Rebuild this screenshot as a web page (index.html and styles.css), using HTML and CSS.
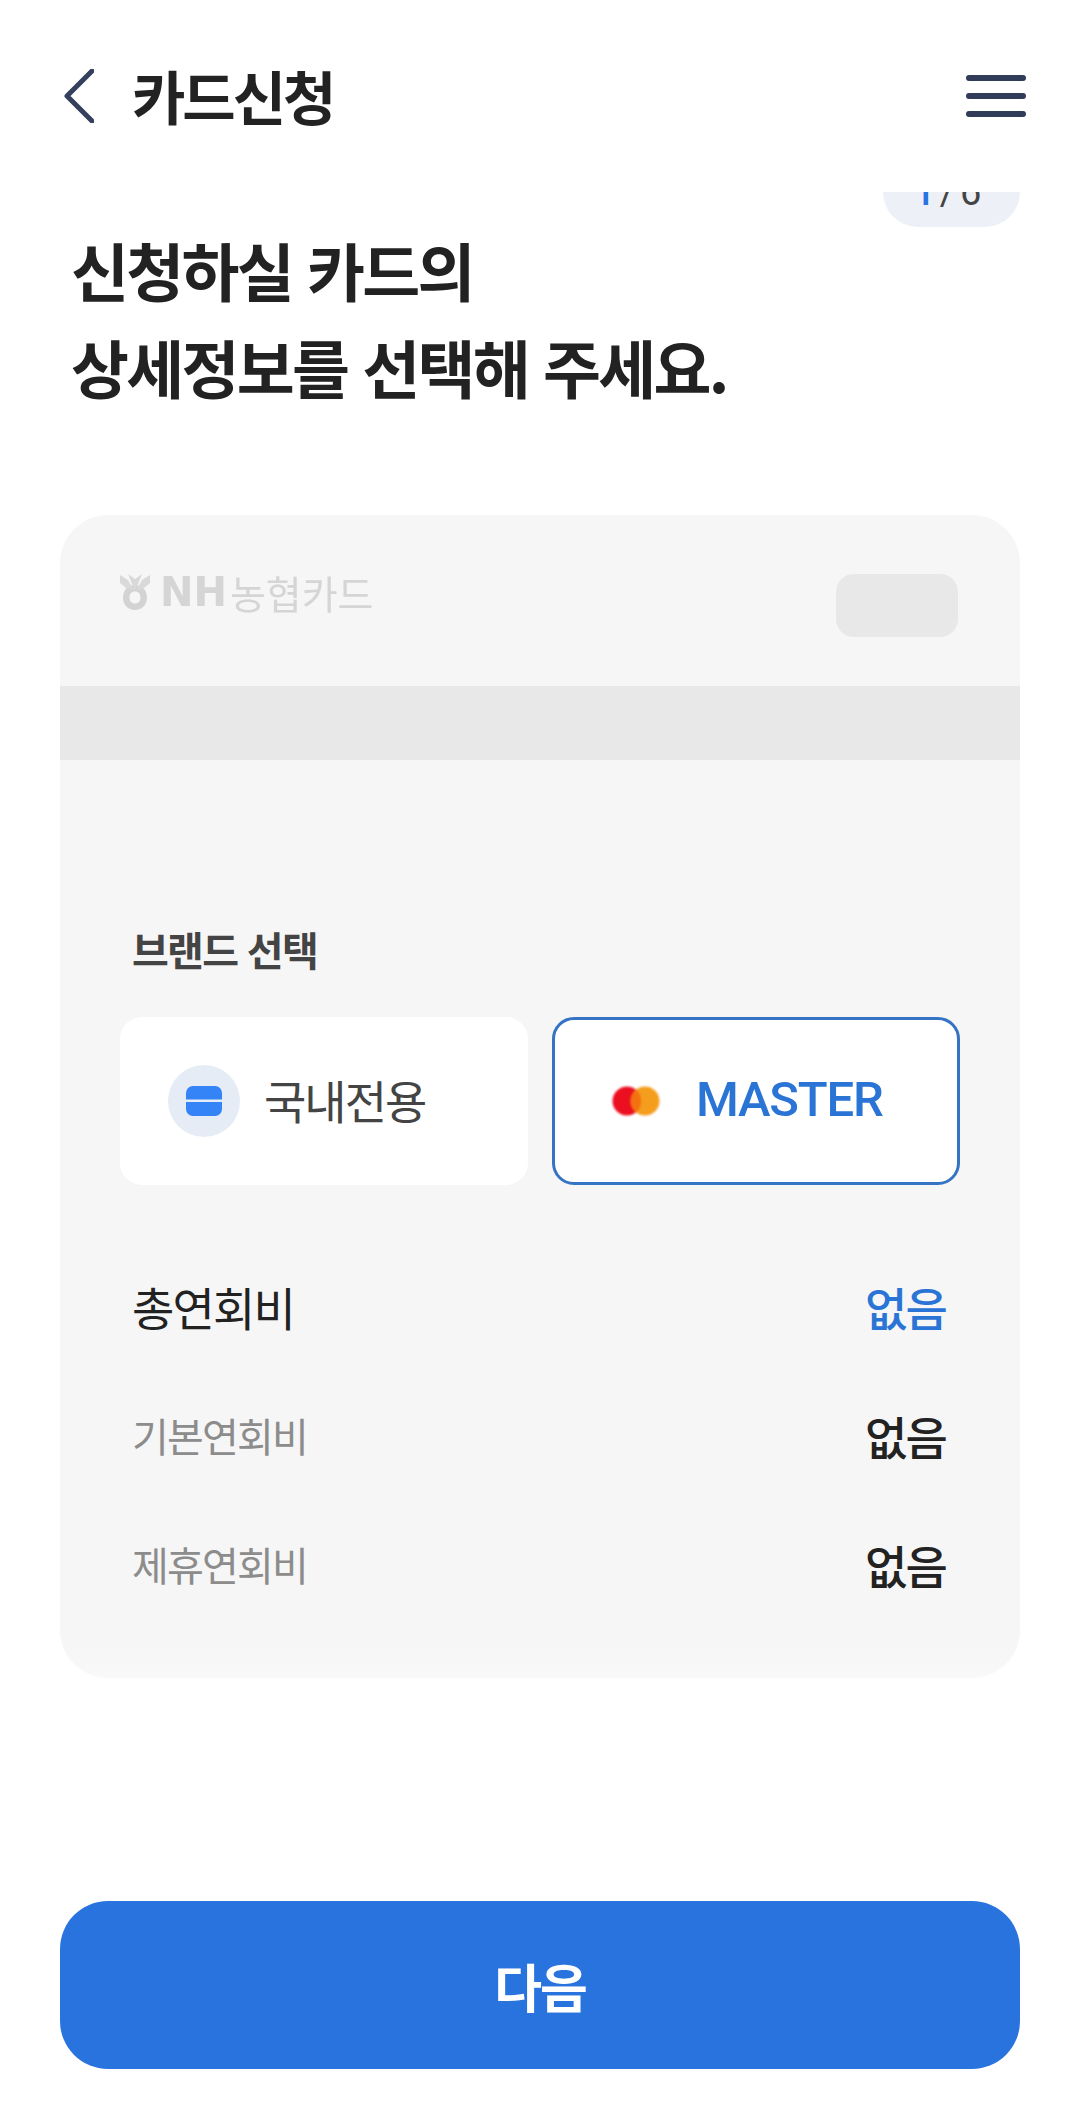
FILE: index.html
```html
<!DOCTYPE html>
<html lang="ko">
<head>
    <meta charset="UTF-8">
    <title>카드신청</title>
    <meta name="viewport" content="width=device-width, initial-scale=1">
    <link rel="stylesheet" href="styles.css">
</head>
<body>
    <div class="page">
        <header class="top-bar">
            <div class="top-left">
                <svg class="back-icon" width="30" height="54" viewBox="0 0 30 54">
                    <path d="M28 2 L3 27 L28 52" fill="none" stroke="#34405c" stroke-width="5" stroke-linecap="round" stroke-linejoin="round"/>
                </svg>
                <h1 class="top-title">카드신청</h1>
            </div>
            <div class="menu-icon">
                <span></span>
                <span></span>
                <span></span>
            </div>
        </header>

        <main class="content">
            <div class="step-badge"><b>1</b> / 6</div>
            <h2 class="heading">신청하실 카드의<br>상세정보를 선택해 주세요.</h2>

            <section class="card">
                <div class="card-top">
                    <div class="logo">
                        <svg class="logo-mark" width="30" height="36" viewBox="0 0 30 36">
                            <path fill-rule="evenodd" d="M15 11 C22 11 27 16 27 23.500 C27 31 22 36 15 36 C8 36 3 31 3 23.500 C3 16 8 11 15 11 Z M15 17.500 C11.500 17.500 9.500 20 9.500 23.500 C9.500 27 11.500 29.500 15 29.500 C18.500 29.500 20.500 27 20.500 23.500 C20.500 20 18.500 17.500 15 17.500 Z" fill="#d3d3d3"/>
                            <path d="M0 1 L8 6 L13.500 16 L6 14 L0 9 Z M30 1 L22 6 L16.500 16 L24 14 L30 9 Z M8 0 L15 5 L22 0 L16 15 L14 15 Z" fill="#d9d9d9"/>
                        </svg>
                        <span class="logo-nh">NH</span>
                        <span class="logo-name">농협카드</span>
                    </div>
                    <div class="chip"></div>
                </div>
                <div class="stripe"></div>

                <div class="card-body">
                    <div class="brand-label">브랜드 선택</div>
                    <div class="brand-list">
                        <div class="brand-btn">
                            <span class="brand-circle">
                                <svg width="36" height="30" viewBox="0 0 36 30">
                                    <rect width="36" height="30" rx="7" fill="#3584f7"/>
                                    <rect y="13.500" width="36" height="2.500" fill="#e6ecf6"/>
                                </svg>
                            </span>
                            <span class="brand-name">국내전용</span>
                        </div>
                        <div class="brand-btn selected">
                            <svg class="master-icon" width="48" height="30" viewBox="0 0 48 30">
                                <circle cx="15" cy="15" r="14.500" fill="#eb0f20"/>
                                <circle cx="33" cy="15" r="14.500" fill="#f59e1e"/>
                                <path d="M24 3.500 C27.500 6 29 10.500 29 15 C29 19.500 27.500 24 24 26.500 C20.500 24 19 19.500 19 15 C19 10.500 20.500 6 24 3.500 Z" fill="#f3710f"/>
                            </svg>
                            <span class="brand-name">MASTER</span>
                        </div>
                    </div>

                    <div class="fee-list">
                        <div class="fee-row total">
                            <span>총연회비</span>
                            <strong>없음</strong>
                        </div>
                        <div class="fee-row">
                            <span>기본연회비</span>
                            <strong>없음</strong>
                        </div>
                        <div class="fee-row">
                            <span>제휴연회비</span>
                            <strong>없음</strong>
                        </div>
                    </div>
                </div>
            </section>

            <button type="button" class="btn-next">다음</button>
        </main>
    </div>
</body>
</html>
```

FILE: styles.css
```css
body {
    margin: 0;
    background: #fff;
    color: #222;
    font-family: "Noto Sans CJK KR", "Noto Sans", sans-serif;
}
.page {
    display: flex;
    flex-direction: column;
    height: 2105px;
    overflow: hidden;
}
.top-bar {
    display: flex;
    flex: none;
    justify-content: space-between;
    align-items: flex-start;
    height: 192px;
    padding: 69px 54px 0 64px;
    box-sizing: border-box;
}
.top-left {
    display: flex;
    align-items: center;
    gap: 38px;
}
.back-icon {
    display: block;
}
.top-title {
    margin: -2px 0 0;
    font-size: 58px;
    line-height: 54px;
    font-weight: 700;
    letter-spacing: -3px;
    color: #222;
}
.menu-icon {
    display: flex;
    flex-direction: column;
    gap: 12px;
    width: 60px;
    margin-top: 6px;
}
.menu-icon span {
    height: 6px;
    border-radius: 3px;
    background: #303c5a;
}

.content {
    display: flex;
    flex: 1;
    flex-direction: column;
    min-height: 0;
    padding: 0 60px 36px;
    overflow: hidden;
}
.step-badge {
    align-self: flex-end;
    width: 137px;
    height: 70px;
    padding-right: 8px;
    margin-top: -35px;
    border-radius: 35px;
    background: #edf0f6;
    color: #444;
    font-size: 38px;
    line-height: 70px;
    text-align: center;
    word-spacing: -5px;
    font-family: "Roboto", sans-serif;
    box-sizing: border-box;
}
.step-badge b {
    color: #2874e0;
    font-weight: 500;
}
.heading {
    margin: -7px 0 101px;
    padding-left: 11px;
    font-size: 63px;
    line-height: 97px;
    font-weight: 700;
    letter-spacing: -2.700px;
    color: #222;
}

.card {
    height: 1163px;
    border-radius: 48px;
    background: linear-gradient(to bottom, #f6f6f6 0, #f6f6f6 1135px, #f9f9f9 100%);
}
.card-top {
    display: flex;
    justify-content: space-between;
    height: 63px;
    padding: 59px 62px 49px 60px;
}
.logo {
    display: flex;
    align-items: center;
    height: 36px;
    color: #d5d5d5;
    filter: blur(0.4px);
}
.logo-mark {
    margin-right: 10px;
}
.logo-nh {
    font-family: "DejaVu Sans", sans-serif;
    font-size: 40px;
    font-weight: 700;
}
.logo-name {
    margin-left: 3px;
    font-size: 39px;
    font-weight: 400;
}
.chip {
    width: 122px;
    height: 63px;
    border-radius: 18px;
    background: #e8e8e8;
}
.stripe {
    height: 74px;
    background: #e8e8e8;
}
.card-body {
    padding: 161px 60px 0;
}
.brand-label {
    padding-left: 12px;
    font-size: 40px;
    line-height: 56px;
    font-weight: 700;
    letter-spacing: -1.700px;
    color: #444;
}
.brand-list {
    display: grid;
    grid-template-columns: 1fr 1fr;
    gap: 24px;
    margin-top: 40px;
}
.brand-btn {
    display: flex;
    align-items: center;
    height: 168px;
    padding-left: 48px;
    border-radius: 22px;
    background: #fff;
    box-sizing: border-box;
}
.brand-circle {
    display: flex;
    justify-content: center;
    align-items: center;
    width: 72px;
    height: 72px;
    margin-right: 24px;
    border-radius: 50%;
    background: #e6ecf6;
}
.brand-name {
    margin-top: -4px;
    font-size: 46px;
    letter-spacing: -2px;
    color: #444;
}
.brand-btn.selected {
    padding-left: 57px;
    border: 3px solid #3573c4;
}
.master-icon {
    margin-right: 36px;
    filter: blur(1px);
}
.brand-btn.selected .brand-name {
    color: #2a74d6;
    font-family: "Roboto", sans-serif;
    font-size: 49px;
    font-weight: 500;
    letter-spacing: -1.200px;
}
.fee-list {
    margin-top: 56px;
}
.fee-row {
    display: flex;
    justify-content: space-between;
    align-items: center;
    height: 129px;
    padding: 0 14px 0 12px;
    color: #8c8c8c;
    font-size: 40px;
    letter-spacing: -1.800px;
}
.fee-row strong {
    color: #222;
    font-size: 46px;
    font-weight: 500;
}
.fee-row.total {
    color: #222;
    font-size: 46px;
}
.fee-row.total strong {
    color: #2a74d6;
}

.btn-next {
    flex: none;
    height: 168px;
    margin-top: auto;
    border: none;
    border-radius: 48px;
    background: #2873de;
    color: #fff;
    font-family: inherit;
    font-size: 52px;
    font-weight: 700;
    letter-spacing: -2px;
}
```
